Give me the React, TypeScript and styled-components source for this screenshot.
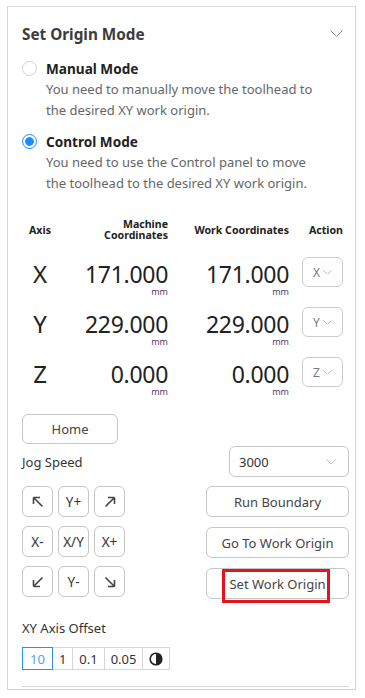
import React from 'react';
import styled, { createGlobalStyle } from 'styled-components';

const GlobalStyle = createGlobalStyle`
	body {
		margin: 0;
		background: #fff;
		font-family: 'Noto Sans', 'Open Sans', sans-serif;
		color: #333;
	}
`;

const axes = [
	{ name: 'X', machine: '171.000', work: '171.000' },
	{ name: 'Y', machine: '229.000', work: '229.000' },
	{ name: 'Z', machine: '0.000', work: '0.000' },
];

const offsets = ['10', '1', '0.1', '0.05'];

const Chevron = ({ size = 13, color = '#888' }: { size?: number; color?: string }) => (
	<svg width={size} height={size * 0.55} viewBox='0 0 13 7' fill='none'>
		<path d='M0.5 0.5 L6.5 6.3 L12.5 0.5' stroke={color} strokeWidth='1' />
	</svg>
);

const Arrow = ({ rotate }: { rotate: number }) => (
	<svg width='14' height='14' viewBox='0 0 14 14' fill='none' style={{ transform: `rotate(${rotate}deg)` }}>
		<path d='M2.5 2.5 L11.5 11.5 M2.5 2.5 H9 M2.5 2.5 V9' stroke='#444' strokeWidth='1.6' />
	</svg>
);

const App = () => {
	return (
		<>
			<GlobalStyle />
			<Panel>
				<Header>
					<Title>Set Origin Mode</Title>
					<Chevron />
				</Header>
				<Options>
					<Option>
						<OptionHead>
							<Radio />
							<OptionTitle>Manual Mode</OptionTitle>
						</OptionHead>
						<Description>
							You need to manually move the toolhead to the desired XY work origin.
						</Description>
					</Option>
					<Option>
						<OptionHead>
							<Radio checked />
							<OptionTitle>Control Mode</OptionTitle>
						</OptionHead>
						<Description>
							You need to use the Control panel to move the toolhead to the desired XY work origin.
						</Description>
					</Option>
				</Options>

				<TableHead>
					<HeadCell align='center'>Axis</HeadCell>
					<HeadCell align='right'>
						Machine
						<br />
						Coordinates
					</HeadCell>
					<HeadCell align='right'>Work Coordinates</HeadCell>
					<HeadCell align='right'>Action</HeadCell>
				</TableHead>
				{axes.map(axis => (
					<AxisRow key={axis.name}>
						<AxisCell>{axis.name}</AxisCell>
						<ValueCell>
							<Value>{axis.machine}</Value>
							<Unit>mm</Unit>
						</ValueCell>
						<ValueCell>
							<Value>{axis.work}</Value>
							<Unit>mm</Unit>
						</ValueCell>
						<ActionCell>
							<AxisSelect>
								{axis.name}
								<Chevron size={9} color='#999' />
							</AxisSelect>
						</ActionCell>
					</AxisRow>
				))}

				<HomeButton>Home</HomeButton>
				<SpeedRow>
					<Label>Jog Speed</Label>
					<SpeedSelect>
						3000
						<Chevron size={10} color='#aaa' />
					</SpeedSelect>
				</SpeedRow>

				<JogSection>
					<JogGrid>
						<JogButton>
							<Arrow rotate={0} />
						</JogButton>
						<JogButton>Y+</JogButton>
						<JogButton>
							<Arrow rotate={90} />
						</JogButton>
						<JogButton>X-</JogButton>
						<JogButton>X/Y</JogButton>
						<JogButton>X+</JogButton>
						<JogButton>
							<Arrow rotate={270} />
						</JogButton>
						<JogButton>Y-</JogButton>
						<JogButton>
							<Arrow rotate={180} />
						</JogButton>
					</JogGrid>
					<ActionList>
						<ActionButton>Run Boundary</ActionButton>
						<ActionButton>Go To Work Origin</ActionButton>
						<ActionButton highlighted>Set Work Origin</ActionButton>
					</ActionList>
				</JogSection>

				<OffsetLabel>XY Axis Offset</OffsetLabel>
				<Segments>
					{offsets.map((value, i) => (
						<Segment key={value} active={i === 0}>
							{value}
						</Segment>
					))}
					<Segment>
						<svg width='14' height='14' viewBox='0 0 14 14'>
							<circle cx='7' cy='7' r='5.8' fill='#fff' stroke='#222' strokeWidth='1.6' />
							<path d='M7 1.2 A5.8 5.8 0 0 1 7 12.8 Z' fill='#222' />
						</svg>
					</Segment>
				</Segments>
				<Divider />
			</Panel>
		</>
	);
};

const Panel = styled.div`
	box-sizing: border-box;
	width: 349px;
	margin: 6px 0 0 7px;
	padding: 15px 6px 1px 14px;
	border: 1px solid #d3d3d3;
	border-top-color: #ddd;
`;

const Header = styled.div`
	display: flex;
	align-items: center;
	justify-content: space-between;
	height: 24px;
	padding-right: 6px;
`;

const Title = styled.div`
	font-size: 15.3px;
	font-weight: 700;
	color: #3c3c3c;
`;

const Options = styled.div`
	display: flex;
	flex-direction: column;
	gap: 9px;
	margin-top: 11px;
`;

const Option = styled.div`
	display: flex;
	flex-direction: column;
`;

const OptionHead = styled.div`
	display: flex;
	align-items: center;
	gap: 9px;
	height: 22px;
`;

const Radio = styled.span<{ checked?: boolean }>`
	box-sizing: border-box;
	width: 15px;
	height: 15px;
	border-radius: 50%;
	border: 1px solid ${p => (p.checked ? '#1a8cff' : '#d0d0d0')};
	background: ${p =>
		p.checked ? 'radial-gradient(circle, #1a8cff 0 4px, #fff 4.6px)' : '#fff'};
`;

const OptionTitle = styled.span`
	font-size: 13.6px;
	font-weight: 700;
	color: #222;
`;

const Description = styled.div`
	max-width: 274px;
	padding-left: 24px;
	font-size: 13px;
	line-height: 21px;
	color: #666;
`;

const columns = '36px 110px 121px 1fr';

const TableHead = styled.div`
	display: grid;
	grid-template-columns: ${columns};
	align-items: center;
	height: 22px;
	margin-top: 25px;
	margin-bottom: 8px;
`;

const HeadCell = styled.div<{ align: 'center' | 'right' }>`
	text-align: ${p => p.align};
	font-size: 10.6px;
	line-height: 11px;
	font-weight: 700;
	color: #222;
	&:last-child {
		padding-right: 6px;
	}
`;

const AxisRow = styled.div`
	display: grid;
	grid-template-columns: ${columns};
	align-items: start;
	height: 50px;
`;

const AxisCell = styled.div`
	padding-top: 13px;
	text-align: center;
	font-size: 24px;
	line-height: 24px;
	color: #222;
`;

const ValueCell = styled.div`
	display: flex;
	flex-direction: column;
	align-items: flex-end;
	padding-top: 13px;
`;

const Value = styled.div`
	font-size: 23px;
	line-height: 24px;
	color: #222;
	letter-spacing: -0.3px;
`;

const Unit = styled.div`
	margin-top: 1px;
	font-size: 9px;
	line-height: 10px;
	color: #5a3a66;
`;

const ActionCell = styled.div`
	display: flex;
	justify-content: flex-end;
	padding-top: 8px;
	padding-right: 6px;
`;

const AxisSelect = styled.div`
	box-sizing: border-box;
	display: flex;
	align-items: center;
	justify-content: center;
	gap: 3px;
	width: 41px;
	height: 30px;
	border: 1px solid #ccc;
	border-radius: 6px;
	font-size: 12px;
	color: #777;
`;

const BaseButton = styled.div`
	box-sizing: border-box;
	display: flex;
	align-items: center;
	justify-content: center;
	height: 31px;
	border: 1px solid #c6c6c6;
	border-radius: 6px;
	background: #fff;
	font-size: 13px;
	color: #444;
`;

const HomeButton = styled(BaseButton)`
	width: 96px;
	height: 30px;
	margin-top: 15px;
	margin-bottom: 2px;
`;

const SpeedRow = styled.div`
	display: flex;
	align-items: center;
	justify-content: space-between;
`;

const Label = styled.div`
	font-size: 13px;
	color: #333;
`;

const SpeedSelect = styled.div`
	box-sizing: border-box;
	display: flex;
	align-items: center;
	justify-content: space-between;
	width: 120px;
	height: 31px;
	padding: 0 12px 0 9px;
	border: 1px solid #c6c6c6;
	border-radius: 6px;
	font-size: 13px;
	color: #333;
`;

const JogSection = styled.div`
	display: flex;
	justify-content: space-between;
	margin-top: 9px;
`;

const JogGrid = styled.div`
	display: grid;
	grid-template-columns: repeat(3, 31px);
	grid-auto-rows: 31px;
	column-gap: 5px;
	row-gap: 9px;
`;

const JogButton = styled(BaseButton)`
	font-size: 13.5px;
	color: #333;
`;

const ActionList = styled.div`
	display: flex;
	flex-direction: column;
	gap: 10px;
	width: 143px;
`;

const ActionButton = styled(BaseButton)<{ highlighted?: boolean }>`
	position: relative;
	&::after {
		content: '';
		display: ${p => (p.highlighted ? 'block' : 'none')};
		position: absolute;
		left: 15px;
		top: 0;
		width: 108px;
		height: 34px;
		box-sizing: border-box;
		border: 3px solid #e8121f;
	}
`;

const OffsetLabel = styled.div`
	margin-top: 19px;
	font-size: 13px;
	line-height: 20px;
	color: #333;
`;

const Segments = styled.div`
	display: flex;
	margin-top: 9px;
`;

const Segment = styled.div<{ active?: boolean }>`
	box-sizing: border-box;
	display: flex;
	align-items: center;
	justify-content: center;
	height: 23px;
	padding: 0 6px;
	margin-left: -1px;
	border: 1px solid ${p => (p.active ? '#2b8ff0' : '#d6d6d6')};
	position: relative;
	z-index: ${p => (p.active ? 1 : 0)};
	font-size: 13px;
	color: ${p => (p.active ? '#5b9ff0' : '#333')};
	&:first-child {
		margin-left: 0;
		padding: 0 7px;
	}
`;

const Divider = styled.div`
	height: 1px;
	background: #d6d6d6;
	margin-top: 16px;
	margin-bottom: 1px;
`;

export default App;
